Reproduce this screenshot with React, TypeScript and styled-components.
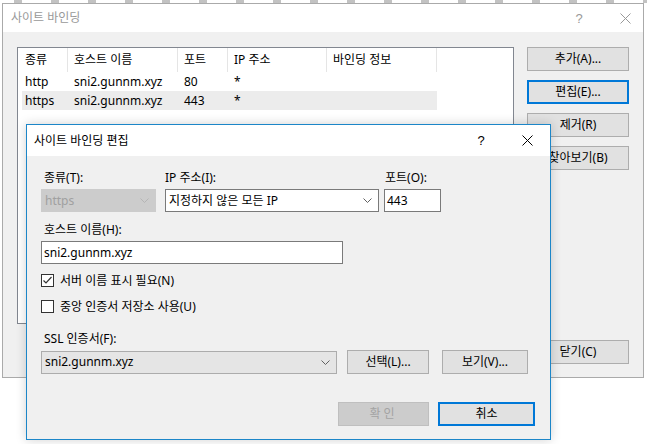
import * as React from "react";
import styled, { createGlobalStyle, css } from "styled-components";

const GlobalStyle = createGlobalStyle`
	html, body {
		margin: 0;
		padding: 0;
		background: #ffffff;
	}
	body {
		font-family: "Noto Sans", "Noto Sans CJK KR", sans-serif;
		font-size: 12px;
		color: #000000;
	}
	* {
		box-sizing: border-box;
	}
`;

const Desktop = styled.div`
	position: relative;
	width: 647px;
	height: 444px;
	overflow: hidden;
	background: #ffffff;
`;

const BackdropStrip = styled.div`
	height: 3px;
	background: repeating-linear-gradient(
		90deg,
		#ffffff 0,
		#ffffff 14px,
		#9a9a9a 14px,
		#9a9a9a 22px,
		#ffffff 22px,
		#ffffff 37px
	);
	opacity: 0.6;
`;

const Window = styled.div<{ $active?: boolean }>`
	position: absolute;
	display: flex;
	flex-direction: column;
	background: #f0f0f0;
	border: 1px solid ${(p) => (p.$active ? "#1c86c8" : "#aaaaaa")};
	${(p) =>
		p.$active &&
		css`
			box-shadow: 0 0 10px rgba(0, 0, 0, 0.18);
		`}
`;

const OuterWindow = styled(Window)`
	left: 2px;
	top: 3px;
	width: 642px;
	height: 375px;
`;

const EditWindow = styled(Window)`
	left: 26px;
	top: 124px;
	width: 525px;
	height: 316px;
`;

const TitleBar = styled.div<{ $active?: boolean; $height: number }>`
	display: flex;
	align-items: center;
	height: ${(p) => p.$height}px;
	flex: none;
	background: #ffffff;
	padding-left: ${(p) => (p.$active ? 7 : 8)}px;
	color: ${(p) => (p.$active ? "#000000" : "#999999")};
`;

const TitleText = styled.div`
	flex: 1;
	font-size: 12px;
	line-height: 16px;
`;

const TitleButton = styled.div<{ $width: number }>`
	width: ${(p) => p.$width}px;
	height: 100%;
	display: flex;
	align-items: center;
	justify-content: center;
	font-size: 13px;
	font-family: "Liberation Sans", sans-serif;
`;

const CloseGlyph = ({ color }: { color: string }) => (
	<svg width="11" height="11" viewBox="0 0 11 11">
		<path d="M0.5 0.5 L10.5 10.5 M10.5 0.5 L0.5 10.5" stroke={color} strokeWidth="1" fill="none" />
	</svg>
);

const OuterBody = styled.div`
	flex: 1;
	display: flex;
	padding: 15px 13px 13px 14px;
`;

const ListView = styled.div`
	width: 497px;
	height: 277px;
	background: #ffffff;
	border: 1px solid #828790;
	padding: 0 0 0 4px;
`;

const ListRow = styled.div<{ $header?: boolean; $selected?: boolean }>`
	display: flex;
	height: ${(p) => (p.$header ? 24 : 19)}px;
	width: 415px;
	align-items: center;
	background: ${(p) => (p.$selected ? "#ececec" : "transparent")};
`;

const ListCell = styled.div<{ $w: number; $header?: boolean; $first?: boolean }>`
	width: ${(p) => p.$w}px;
	height: 100%;
	flex: none;
	display: flex;
	align-items: center;
	padding-left: ${(p) => (p.$first ? 3 : 6)}px;
	line-height: 16px;
	white-space: nowrap;
	border-right: ${(p) => (p.$header ? "1px solid #e5e5e5" : "none")};
`;

const SideColumn = styled.div`
	display: flex;
	flex-direction: column;
	gap: 9px;
	margin-left: 13px;
	width: 102px;
`;

const Button = styled.div<{ $focused?: boolean; $disabled?: boolean; $w?: number; $gap?: number }>`
	height: 24px;
	width: ${(p) => (p.$w ? `${p.$w}px` : "100%")};
	margin-left: ${(p) => p.$gap ?? 0}px;
	flex: none;
	display: flex;
	align-items: center;
	justify-content: center;
	background: #e1e1e1;
	border: 1px solid #adadad;
	line-height: 16px;
	white-space: nowrap;
	${(p) =>
		p.$focused &&
		css`
			border: 2px solid #0078d7;
		`}
	${(p) =>
		p.$disabled &&
		css`
			background: #cccccc;
			border-color: #bfbfbf;
			color: #a3a3a3;
			letter-spacing: 3px;
		`}
`;

const BottomButton = styled(Button)`
	margin-top: auto;
`;

const EditBody = styled.div`
	flex: 1;
	display: flex;
	flex-direction: column;
	padding: 14px 14px 0 14px;
`;

const FieldRow = styled.div`
	display: flex;
	align-items: flex-end;
`;

const Field = styled.div<{ $w: number; $gap?: number }>`
	display: flex;
	flex-direction: column;
	width: ${(p) => p.$w}px;
	margin-left: ${(p) => p.$gap ?? 0}px;
	flex: none;
`;

const Label = styled.div<{ $top?: number; $indent?: number }>`
	line-height: 16px;
	height: 16px;
	padding-left: ${(p) => p.$indent ?? 3}px;
	margin-bottom: 3px;
	margin-top: ${(p) => p.$top ?? 0}px;
	white-space: nowrap;
`;

const ComboBox = styled.div<{ $variant: "disabled" | "edit" | "list"; $w?: number }>`
	height: 23px;
	width: ${(p) => (p.$w ? `${p.$w}px` : "100%")};
	display: flex;
	align-items: center;
	padding: 0 6px 0 3px;
	line-height: 16px;
	white-space: nowrap;
	${(p) =>
		p.$variant === "disabled" &&
		css`
			background: #cccccc;
			border: 1px solid #cccccc;
			color: #a0a0a0;
		`}
	${(p) =>
		p.$variant === "edit" &&
		css`
			background: #ffffff;
			border: 1px solid #7a7a7a;
		`}
	${(p) =>
		p.$variant === "list" &&
		css`
			background: #e5e5e5;
			border: 1px solid #acacac;
		`}
`;

const ComboText = styled.span`
	flex: 1;
`;

const Chevron = ({ color }: { color: string }) => (
	<svg width="9" height="5" viewBox="0 0 9 5">
		<path d="M0.5 0.5 L4.5 4.5 L8.5 0.5" stroke={color} strokeWidth="1" fill="none" />
	</svg>
);

const TextBox = styled.div<{ $w?: number }>`
	height: 23px;
	width: ${(p) => (p.$w ? `${p.$w}px` : "100%")};
	background: #ffffff;
	border: 1px solid #7a7a7a;
	display: flex;
	align-items: center;
	padding-left: 2px;
	line-height: 16px;
`;

const CheckRow = styled.div<{ $top: number }>`
	display: flex;
	align-items: center;
	height: 16px;
	margin-top: ${(p) => p.$top}px;
`;

const CheckBox = styled.div`
	width: 13px;
	height: 13px;
	border: 1px solid #333333;
	background: #ffffff;
	display: flex;
	align-items: center;
	justify-content: center;
	margin-right: 6px;
`;

const CheckMark = () => (
	<svg width="11" height="11" viewBox="0 0 11 11">
		<path d="M1.5 5.5 L4 8 L9.5 2" stroke="#333333" strokeWidth="1.2" fill="none" />
	</svg>
);

const CertRow = styled.div`
	display: flex;
	align-items: center;
`;

const DialogButtons = styled.div`
	display: flex;
	justify-content: flex-end;
	gap: 9px;
	margin-top: 28px;
	padding-right: 1px;
`;

const columns = [
	{ title: "종류", w: 46 },
	{ title: "호스트 이름", w: 110 },
	{ title: "포트", w: 50 },
	{ title: "IP 주소", w: 99 },
	{ title: "바인딩 정보", w: 110 },
];

const bindings = [
	["http", "sni2.gunnm.xyz", "80", "*", ""],
	["https", "sni2.gunnm.xyz", "443", "*", ""],
];

export default function App() {
	return (
		<Desktop>
			<GlobalStyle />
			<BackdropStrip />
			<OuterWindow>
				<TitleBar $height={28}>
					<TitleText>사이트 바인딩</TitleText>
					<TitleButton $width={46}>?</TitleButton>
					<TitleButton $width={5} />
					<TitleButton $width={36}>
						<CloseGlyph color="#999999" />
					</TitleButton>
				</TitleBar>
				<OuterBody>
					<ListView>
						<ListRow $header>
							{columns.map((c, i) => (
								<ListCell key={c.title} $w={c.w} $header $first={i === 0}>
									{c.title}
								</ListCell>
							))}
						</ListRow>
						{bindings.map((row, r) => (
							<ListRow key={r} $selected={r === 1}>
								{row.map((v, i) => (
									<ListCell key={i} $w={columns[i].w} $first={i === 0}>
										{v}
									</ListCell>
								))}
							</ListRow>
						))}
					</ListView>
					<SideColumn>
						<Button>추가(A)...</Button>
						<Button $focused>편집(E)...</Button>
						<Button>제거(R)</Button>
						<Button>찾아보기(B)</Button>
						<BottomButton>닫기(C)</BottomButton>
					</SideColumn>
				</OuterBody>
			</OuterWindow>

			<EditWindow $active>
				<TitleBar $active $height={31}>
					<TitleText>사이트 바인딩 편집</TitleText>
					<TitleButton $width={46}>?</TitleButton>
					<TitleButton $width={46}>
						<CloseGlyph color="#000000" />
					</TitleButton>
				</TitleBar>
				<EditBody>
					<FieldRow>
						<Field $w={115}>
							<Label>종류(T):</Label>
							<ComboBox $variant="disabled">
								<ComboText>https</ComboText>
								<Chevron color="#b5b5b5" />
							</ComboBox>
						</Field>
						<Field $w={214} $gap={9}>
							<Label $indent={0}>IP 주소(I):</Label>
							<ComboBox $variant="edit">
								<ComboText>지정하지 않은 모든 IP</ComboText>
								<Chevron color="#606060" />
							</ComboBox>
						</Field>
						<Field $w={57} $gap={5}>
							<Label $indent={1}>포트(O):</Label>
							<TextBox>443</TextBox>
						</Field>
					</FieldRow>

					<Field $w={302}>
						<Label $top={10}>호스트 이름(H):</Label>
						<TextBox>sni2.gunnm.xyz</TextBox>
					</Field>

					<CheckRow $top={8}>
						<CheckBox>
							<CheckMark />
						</CheckBox>
						서버 이름 표시 필요(N)
					</CheckRow>
					<CheckRow $top={10}>
						<CheckBox />
						중앙 인증서 저장소 사용(U)
					</CheckRow>

					<Label $top={17}>SSL 인증서(F):</Label>
					<CertRow>
						<ComboBox $variant="list" $w={296}>
							<ComboText>sni2.gunnm.xyz</ComboText>
							<Chevron color="#606060" />
						</ComboBox>
						<Button $w={82} $gap={10}>
							선택(L)...
						</Button>
						<Button $w={86} $gap={13}>
							보기(V)...
						</Button>
					</CertRow>

					<DialogButtons>
						<Button $w={91} $disabled>
							확인
						</Button>
						<Button $w={97} $focused>
							취소
						</Button>
					</DialogButtons>
				</EditBody>
			</EditWindow>
		</Desktop>
	);
}
